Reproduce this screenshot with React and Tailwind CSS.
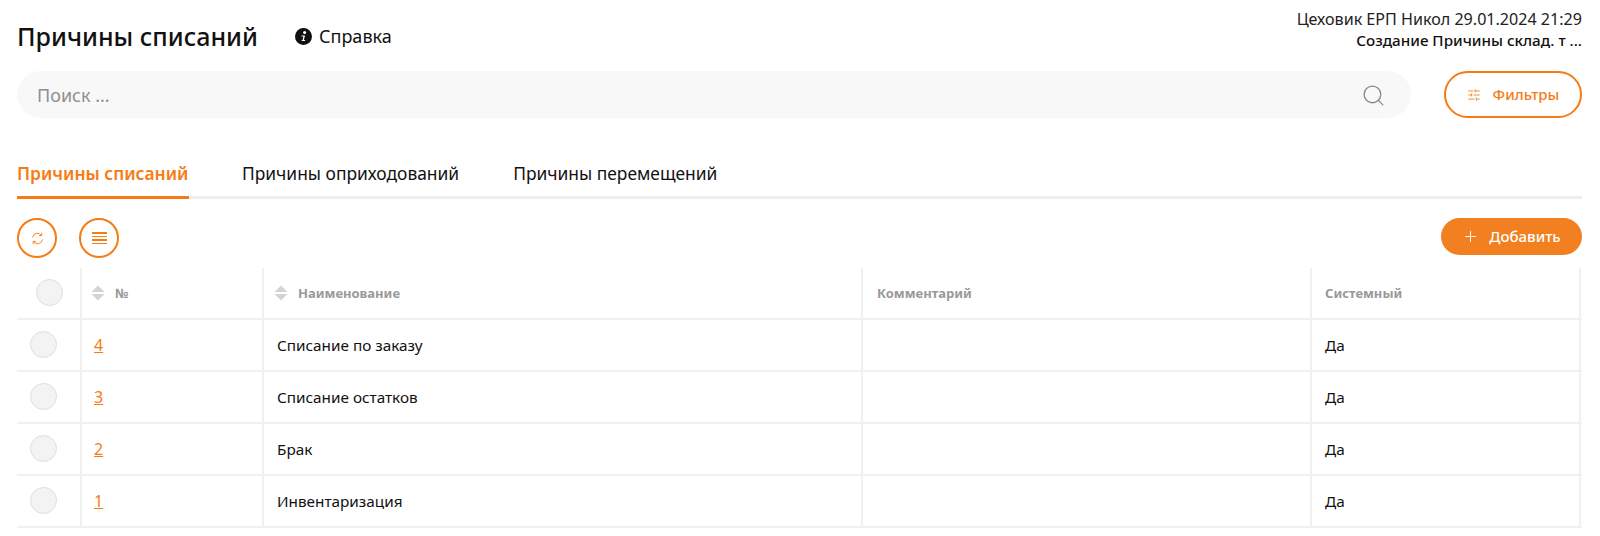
import React from "react";
import { Search, SlidersHorizontal, Plus } from "lucide-react";

const rows = [
  ["4", "Списание по заказу"],
  ["3", "Списание остатков"],
  ["2", "Брак"],
  ["1", "Инвентаризация"],
];

function Sort() {
  return (
    <svg width="14" height="16" viewBox="0 0 14 16" className="shrink-0 -mt-[2px]">
      <path d="M7 0.5 L13.5 7 H0.5 Z" fill="#d4d4d4" />
      <path d="M0.5 9 H13.5 L7 15.5 Z" fill="#d4d4d4" />
    </svg>
  );
}

function Radio() {
  return <div className="w-[27px] h-[27px] rounded-full bg-[#f3f3f3] border border-[#dedede]" />;
}

function Cols({ children, className }) {
  return <div className={"grid grid-cols-[63px_182px_599px_449px_271px] " + className}>{children}</div>;
}

const cell = "flex items-center border-l-2 border-[#f0f0f0]";

export default function App() {
  return (
    <div className="w-[1600px] h-[536px] bg-white overflow-hidden pl-[17px] pr-[18px] font-['Noto_Sans',sans-serif] text-[#111]">
      <div className="flex h-[71px]">
        <div className="flex items-start pt-[18px]">
          <h1 className="text-[25px] leading-[36px] font-medium w-[240px] whitespace-nowrap">Причины списаний</h1>
          <div className="flex items-center gap-[7px] ml-[38px] mt-[7px] text-[18px] leading-[22px]">
            <svg width="17" height="17" viewBox="0 0 17 17">
              <circle cx="8.5" cy="8.5" r="8.5" fill="#111" />
              <circle cx="9.6" cy="4.6" r="1.5" fill="#fff" />
              <path d="M6.6 7.4 H10 L8.9 11.9 H10.2 L9.9 13 H6.6 L6.9 11.9 H7.6 L8.4 8.5 H6.4 Z" fill="#fff" />
            </svg>
            <span>Справка</span>
          </div>
        </div>
        <div className="ml-auto text-right leading-[21px] pt-[9px]">
          <div className="text-[#222] text-[16.1px]">Цеховик ЕРП Никол 29.01.2024 21:29</div>
          <div className="font-medium text-[15.2px]">Создание Причины склад. т ...</div>
        </div>
      </div>

      <div className="flex justify-between">
        <div className="w-[1394px] h-[47px] bg-[#f8f8f8] rounded-full flex items-center pl-[20px] pr-[25px] pt-px text-[#8f8f8f] text-[18px]">
          <span>Поиск ...</span>
          <Search className="ml-auto text-[#8a8a8a]" size={25} strokeWidth={1.3} />
        </div>
        <div className="w-[138px] h-[47px] rounded-full border-2 border-[#f57c14] text-[#f57c14] flex items-center justify-center gap-[12px] text-[15px] font-medium">
          <SlidersHorizontal size={14} strokeWidth={1.5} />
          <span>Фильтры</span>
        </div>
      </div>

      <div className="mt-[39px] h-[42px] flex border-b-[3px] border-[#eeeeee] text-[17.4px]">
        <div className="w-[172px] h-[42px] border-b-[3px] border-[#f57c14] text-[#f57c14] font-semibold whitespace-nowrap pt-[3px]">Причины списаний</div>
        <div className="ml-[53px] pt-[3px] whitespace-nowrap">Причины оприходований</div>
        <div className="ml-[54px] pt-[3px] whitespace-nowrap">Причины перемещений</div>
      </div>

      <div className="flex items-start mt-[19px] h-[50px]">
        <div className="w-[40px] h-[40px] rounded-full border-2 border-[#f57c14] text-[#f57c14] flex items-center justify-center">
          <svg width="13" height="13" viewBox="0 0 13 13" fill="none" stroke="currentColor" strokeWidth="0.9" strokeLinecap="round" strokeLinejoin="round">
            <path d="M1.5 5.2 A5 5 0 0 1 10.4 3.2" />
            <path d="M10.8 1.2 V3.6 H8.4" />
            <path d="M11.5 7.8 A5 5 0 0 1 2.6 9.8" />
            <path d="M2.2 11.8 V9.4 H4.6" />
          </svg>
        </div>
        <div className="ml-[22px] w-[40px] h-[40px] rounded-full border-2 border-[#f57c14] text-[#f57c14] flex flex-col items-center justify-center gap-[2px]">
          <div className="w-[15px] h-[1.5px] bg-[#f57c14]" />
          <div className="w-[15px] h-[1.5px] bg-[#f57c14]" />
          <div className="w-[15px] h-[1.5px] bg-[#f57c14]" />
          <div className="w-[15px] h-[1.5px] bg-[#f57c14]" />
        </div>
        <div className="ml-auto w-[141px] h-[37px] rounded-full bg-[#f28020] text-white flex items-center justify-center gap-[10px] text-[15px] font-medium">
          <Plus size={17} strokeWidth={1.3} />
          <span>Добавить</span>
        </div>
      </div>

      <Cols className="h-[52px] border-b-2 border-[#f0f0f0] text-[13px] font-bold text-[#999]">
        <div className="flex items-center pl-[19px] pb-[2px]"><Radio /></div>
        <div className={cell + " pl-[9px] pt-[2px] gap-[10px]"}><Sort /><span>№</span></div>
        <div className={cell + " pl-[10px] pt-[2px] gap-[10px]"}><Sort /><span>Наименование</span></div>
        <div className={cell + " pl-[14px] pt-[2px]"}>Комментарий</div>
        <div className={cell + " pl-[13px] pt-[2px] border-r-2"}>Системный</div>
      </Cols>
      {rows.map(([n, name]) => (
        <Cols key={n} className="h-[52px] border-b-2 border-[#f0f0f0] text-[15.3px]">
          <div className="flex items-center pl-[13px] pb-[2px]"><Radio /></div>
          <div className={cell + " pl-[12px] text-[#f57c14] text-[16px] underline"}>{n}</div>
          <div className={cell + " pl-[13px]"}>{name}</div>
          <div className={cell} />
          <div className={cell + " pl-[13px] border-r-2"}>Да</div>
        </Cols>
      ))}
    </div>
  );
}
